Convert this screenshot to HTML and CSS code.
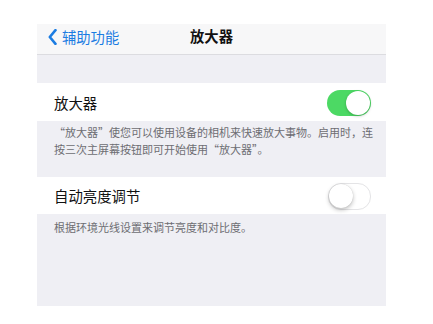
FILE: index.html
```html
<!DOCTYPE html>
<html lang="zh">
<head>
<meta charset="utf-8">
<link rel="stylesheet" href="styles.css">
</head>
<body>
<div class="screen">
  <div class="nav">
    <div class="back">
      <svg class="chev" width="9" height="16" viewBox="0 0 9 16"><path d="M7.5 1.2 L1.8 8 L7.5 14.8" fill="none" stroke="#1b7ce2" stroke-width="2.6" stroke-linecap="round" stroke-linejoin="round"/></svg>
      <span>辅助功能</span>
    </div>
    <div class="title">放大器</div>
  </div>
  <div class="spacer"></div>
  <div class="row">
    <span class="label">放大器</span>
    <span class="toggle on"><span class="knob"></span></span>
  </div>
  <div class="footer f1">“放大器”使您可以使用设备的相机来快速放大事物。启用时，连按三次主屏幕按钮即可开始使用“放大器”。</div>
  <div class="row row2">
    <span class="label">自动亮度调节</span>
    <span class="toggle off"><span class="knob"></span></span>
  </div>
  <div class="footer f2">根据环境光线设置来调节亮度和对比度。</div>
</div>
</body>
</html>
```
FILE: styles.css
```css
html, body {
  margin: 0;
  padding: 0;
  background: #ffffff;
}
body {
  font-family: "Noto Sans CJK SC", "Noto Sans", sans-serif;
}
.screen {
  margin: 24px 0 0 37px;
  width: 349px;
}
.nav {
  position: relative;
  height: 30px;
  background: #f7f7f8;
  border-bottom: 1px solid #dcdce0;
  display: flex;
  align-items: center;
}
.back {
  display: flex;
  align-items: center;
  margin-left: 11px;
  margin-top: -5px;
  color: #1b7ce2;
  font-size: 14.3px;
}
.chev {
  margin-right: 5px;
}
.title {
  position: absolute;
  left: 0;
  right: 0;
  top: 0;
  text-align: center;
  line-height: 24px;
  font-size: 14.3px;
  font-weight: 700;
  color: #111;
}
.spacer {
  height: 28px;
  background: #efeff4;
}
.row {
  height: 38px;
  display: flex;
  align-items: center;
  justify-content: space-between;
  padding: 0 15px 0 17px;
  background: #fff;
}
.row2 {
  height: 37px;
}
.label {
  font-size: 14.4px;
  color: #111;
}
.toggle {
  position: relative;
  width: 44px;
  height: 26px;
  border-radius: 13px;
  box-sizing: border-box;
  margin-top: 2px;
}
.toggle.on {
  background: #4cd964;
}
.toggle.off {
  background: #fff;
  border: 1.5px solid #e4e4e6;
  height: 27px;
  width: 43px;
}
.knob {
  position: absolute;
  width: 24px;
  height: 24px;
  border-radius: 50%;
  background: #fff;
}
.on .knob {
  right: 1px;
  top: 1px;
  box-shadow: 0 1px 3px rgba(0,0,0,0.25);
}
.off .knob {
  left: 0;
  top: 0;
  width: 24px;
  height: 24px;
  box-shadow: 0 2px 4px rgba(0,0,0,0.25), 0 0 1px rgba(0,0,0,0.2);
}
.footer {
  background: #efeff4;
  color: #6d6d72;
  font-size: 11px;
  line-height: 17px;
  padding: 3px 8px 0 17px;
  box-sizing: border-box;
}
.f1 {
  height: 56px;
}
.f2 {
  height: 92px;
  padding-top: 5px;
}
```
